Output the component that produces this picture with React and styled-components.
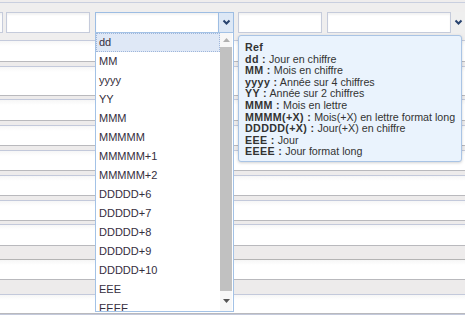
import React from "react";
import styled, { createGlobalStyle } from "styled-components";

const Global = createGlobalStyle`
  html, body {
    margin: 0;
    padding: 0;
    background: #ffffff;
    font-family: "Liberation Sans", Arial, sans-serif;
  }
  #root {
    width: 465px;
    height: 315px;
    overflow: hidden;
  }
`;

// Grille principale
const Grid = styled.div`
  position: relative;
  width: 465px;
  height: 315px;
  overflow: hidden;
  background: #efeded;
  padding-top: 2px;
  box-sizing: border-box;
`;

// Barre des filtres
const FilterBar = styled.div`
  display: flex;
  align-items: flex-start;
  height: 38px;
  box-sizing: border-box;
  border-top: 1px solid #c9cfdf;
  padding-top: 9px;
  background: #efeeee;
`;

const Input = styled.div`
  flex: none;
  width: ${(p) => p.width}px;
  height: 21px;
  margin-left: ${(p) => p.gap || 0}px;
  box-sizing: border-box;
  background: #fff;
  border: 1px solid #c5cbdb;
  ${(p) => p.cutLeft && "border-left: none;"}
  box-shadow: inset 0 2px 2px rgba(0, 0, 0, 0.05);
`;

const Select = styled.div`
  flex: none;
  display: flex;
  width: ${(p) => p.width}px;
  height: 21px;
  margin-left: ${(p) => p.gap}px;
`;

const SelectField = styled.div`
  flex: 1;
  box-sizing: border-box;
  background: #fff;
  border: 1px solid ${(p) => (p.focused ? "#9dbde3" : "#c5cbdb")};
  box-shadow: inset 0 2px 2px rgba(0, 0, 0, 0.05);
`;

const SelectArrow = styled.div`
  flex: none;
  width: 15px;
  box-sizing: border-box;
  display: flex;
  align-items: center;
  justify-content: center;
  background: ${(p) => (p.focused ? "#dde8f6" : "#efefef")};
  border: 1px solid ${(p) => (p.focused ? "#9dbde3" : "#efefef")};
  border-left: none;
`;

// Lignes du tableau
const Body = styled.div`
  display: flex;
  flex-direction: column;
  border-top: 1px solid #c4cadc;
`;

const Row = styled.div`
  height: ${(p) => p.h}px;
  background: linear-gradient(#f6f6f6, #ffffff 5px);
  flex: none;
`;

const Band = styled.div`
  height: ${(p) => p.h}px;
  flex: none;
  box-sizing: border-box;
  background: #edebeb;
  border-top: 1px solid #b9b9bd;
  border-bottom: 1px solid ${(p) => (p.gray ? "#b4b4b4" : "#c3c9db")};
`;

// Liste déroulante
const DropList = styled.div`
  position: absolute;
  left: 95px;
  top: 32px;
  width: 139px;
  height: 280px;
  box-sizing: border-box;
  border: 1px solid #a3c2e6;
  background: #fff;
  display: flex;
  overflow: hidden;
`;

const Items = styled.div`
  flex: 1;
  display: flex;
  flex-direction: column;
  overflow: hidden;
`;

const Item = styled.div`
  flex: none;
  height: 19px;
  line-height: 19px;
  padding-left: 3px;
  box-sizing: border-box;
  font-size: 11px;
  color: #352e3d;
  white-space: nowrap;
  ${(p) =>
    p.active &&
    `background: #dfe8f6;
     outline: 1px dotted #9fb6da;
     outline-offset: -1px;`}
`;

const ScrollBar = styled.div`
  flex: none;
  width: 12px;
  margin-right: 1px;
  display: flex;
  flex-direction: column;
  background: #f3f3f3;
`;

const ScrollArrow = styled.div`
  flex: none;
  height: ${(p) => p.h}px;
  display: flex;
  align-items: center;
  justify-content: center;
  background: #f7f7f7;
`;

const Thumb = styled.div`
  flex: 1;
  background: #c1c1c1;
`;

// Info-bulle
const Tooltip = styled.div`
  position: absolute;
  left: 238px;
  top: 35px;
  width: 224px;
  height: 127px;
  box-sizing: border-box;
  padding: 6px 5px 5px 6px;
  background: #eaf3fd;
  border: 1px solid #a9c4e5;
  border-radius: 3px;
  box-shadow: 0 1px 3px rgba(0, 0, 0, 0.18);
  font-size: 10.7px;
  line-height: 11.6px;
  color: #333;
`;

const Line = styled.div`
  white-space: nowrap;
`;

const Key = styled.b`
  font-weight: bold;
  letter-spacing: 0.35px;
`;

const Chevron = () => (
  <svg width="9" height="7" viewBox="0 0 9 7">
    <polyline points="1.5,1.5 4.5,4.5 7.5,1.5" fill="none" stroke="#27426e" strokeWidth="2" />
  </svg>
);

const Triangle = ({ up }) => (
  <svg width="7" height="4" viewBox="0 0 7 4">
    <polygon points={up ? "0,4 7,4 3.5,0" : "0,0 7,0 3.5,4"} fill={up ? "#b0b0b0" : "#555"} />
  </svg>
);

const rows = [
  ["row", 20],
  ["band", 6],
  ["row", 28],
  ["band", 5],
  ["row", 20],
  ["band", 6],
  ["row", 19],
  ["band", 6],
  ["row", 19],
  ["band", 6],
  ["row", 19],
  ["band", 6],
  ["row", 19],
  ["band", 5],
  ["row", 20],
  ["gray", 15],
  ["row", 19],
  ["band", 16],
  ["row", 18],
  ["band", 2],
];

const formats = [
  "dd", "MM", "yyyy", "YY", "MMM", "MMMMM", "MMMMM+1", "MMMMM+2",
  "DDDDD+6", "DDDDD+7", "DDDDD+8", "DDDDD+9", "DDDDD+10", "EEE", "EEEE",
];

const aide = [
  ["dd", "Jour en chiffre"],
  ["MM", "Mois en chiffre"],
  ["yyyy", "Année sur 4 chiffres"],
  ["YY", "Année sur 2 chiffres"],
  ["MMM", "Mois en lettre"],
  ["MMMM(+X)", "Mois(+X) en lettre format long"],
  ["DDDDD(+X)", "Jour(+X) en chiffre"],
  ["EEE", "Jour"],
  ["EEEE", "Jour format long"],
];

const App = () => {
  return (
    <Grid>
      <Global />
      <FilterBar>
        <Input width={3} cutLeft />
        <Input width={84} gap={3} />
        <Select width={139} gap={5}>
          <SelectField focused />
          <SelectArrow focused>
            <Chevron />
          </SelectArrow>
        </Select>
        <Input width={84} gap={4} />
        <Select width={139} gap={5}>
          <SelectField />
          <SelectArrow>
            <Chevron />
          </SelectArrow>
        </Select>
      </FilterBar>
      <Body>
        {rows.map(([type, h], i) =>
          type === "row" ? <Row key={i} h={h} /> : <Band key={i} h={h} gray={type === "gray"} />
        )}
      </Body>

      <DropList>
        <Items>
          {formats.map((f, i) => (
            <Item key={f} active={i === 0}>
              {f}
            </Item>
          ))}
        </Items>
        <ScrollBar>
          <ScrollArrow h={14}>
            <Triangle up />
          </ScrollArrow>
          <Thumb />
          <ScrollArrow h={20}>
            <Triangle />
          </ScrollArrow>
        </ScrollBar>
      </DropList>

      <Tooltip>
        <Line>
          <Key>Ref</Key>
        </Line>
        {aide.map(([k, v]) => (
          <Line key={k}>
            <Key>{k} :</Key> {v}
          </Line>
        ))}
      </Tooltip>
    </Grid>
  );
};

export default App;
